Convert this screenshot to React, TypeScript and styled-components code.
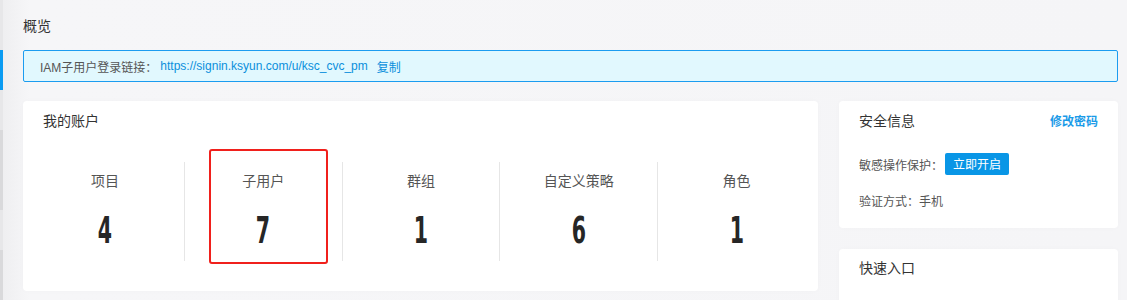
import React from "react";
import styled, { createGlobalStyle } from "styled-components";

const GlobalStyle = createGlobalStyle`
  html, body {
    margin: 0;
    padding: 0;
    background: #f5f5f7;
  }
  body {
    font-family: "Liberation Sans", "Noto Sans CJK SC", sans-serif;
    color: #333;
  }
`;

const stats = [
  { label: "项目", value: 4 },
  { label: "子用户", value: 7, marked: true },
  { label: "群组", value: 1 },
  { label: "自定义策略", value: 6 },
  { label: "角色", value: 1 },
];

const strip = [
  { h: 50, c: "#e7e7e9" },
  { h: 40, c: "#0b9bf2" },
  { h: 40, c: "#e7e7e9" },
  { h: 80, c: "#d9d9db" },
  { h: 40, c: "#e7e7e9" },
  { h: 50, c: "#d9d9db" },
];

const App = () => {
  return (
    <Page>
      <GlobalStyle />
      <Strip>
        {strip.map((s, i) => (
          <StripPart key={i} $h={s.h} $c={s.c} />
        ))}
      </Strip>

      <Main>
        <Title>概览</Title>

        <Alert>
          <AlertLabel>IAM子用户登录链接：</AlertLabel>
          <AlertLink>https://signin.ksyun.com/u/ksc_cvc_pm</AlertLink>
          <CopyLink>复制</CopyLink>
        </Alert>

        <Grid>
          <AccountCard>
            <AccountTitle>我的账户</AccountTitle>
            <Stats>
              {stats.map((s, i) => (
                <Stat key={s.label} $first={i === 0}>
                  <StatLabel>{s.label}</StatLabel>
                  <StatValue>
                    <Digits>{s.value}</Digits>
                  </StatValue>
                  {s.marked && <Mark />}
                </Stat>
              ))}
            </Stats>
          </AccountCard>

          <Side>
            <SecurityCard>
              <CardHead>
                <CardTitle>安全信息</CardTitle>
                <HeadLink>修改密码</HeadLink>
              </CardHead>
              <InfoRow $gap={23}>
                敏感操作保护：
                <EnableButton>立即开启</EnableButton>
              </InfoRow>
              <InfoRow $gap={14}>验证方式：手机</InfoRow>
            </SecurityCard>

            <QuickCard>
              <CardTitle>快速入口</CardTitle>
            </QuickCard>
          </Side>
        </Grid>
      </Main>
    </Page>
  );
};

export default App;

const Page = styled.div`
  display: flex;
  width: 1127px;
  height: 300px;
  overflow: hidden;
  background: linear-gradient(90deg, #eeeef0 0px, #f6f6f8 30px, #f5f5f7 100%);
`;

const Strip = styled.div`
  width: 3px;
  flex-shrink: 0;
  display: flex;
  flex-direction: column;
`;

const StripPart = styled.div<{ $h: number; $c: string }>`
  height: ${(p) => p.$h}px;
  background: ${(p) => p.$c};
`;

const Main = styled.div`
  flex: 1;
  padding: 15px 9px 0 20px;
`;

const Title = styled.div`
  font-family: "Noto Sans CJK SC", sans-serif;
  font-size: 14px;
  line-height: 20px;
  color: #333;
`;

const Alert = styled.div`
  margin-top: 15px;
  height: 32px;
  box-sizing: border-box;
  border: 1px solid #1b9cf0;
  border-radius: 2px;
  background: #e1f8fe;
  display: flex;
  align-items: center;
  padding-left: 16px;
  font-size: 12px;
`;

const AlertLabel = styled.span`
  color: #555;
`;

const AlertLink = styled.span`
  color: #0a8fdc;
  margin-left: 3px;
`;

const CopyLink = styled.span`
  color: #0a8fdc;
  margin-left: 9px;
  font-family: "Noto Sans CJK SC", sans-serif;
`;

const Grid = styled.div`
  margin-top: 19px;
  display: grid;
  grid-template-columns: 795px 279px;
  gap: 21px;
  align-items: start;
`;

const Card = styled.div`
  background: #fff;
  border-radius: 4px;
  box-shadow: 0 0 6px rgba(0, 0, 0, 0.02);
  box-sizing: border-box;
`;

const AccountCard = styled(Card)`
  height: 190px;
  padding-top: 9px;
`;

const CardTitle = styled.div`
  font-family: "Noto Sans CJK SC", sans-serif;
  font-size: 14px;
  line-height: 20px;
  color: #333;
`;

const AccountTitle = styled(CardTitle)`
  padding: 0 20px;
`;

const Stats = styled.div`
  margin-top: 32px;
  padding: 0 3px;
  display: grid;
  grid-template-columns: repeat(5, 1fr);
`;

const Stat = styled.div<{ $first: boolean }>`
  position: relative;
  height: 99px;
  border-left: ${(p) => (p.$first ? "none" : "1px solid #e6e6e6")};
  display: flex;
  flex-direction: column;
  align-items: center;
`;

const StatLabel = styled.div`
  margin-top: 8px;
  font-family: "Noto Sans CJK SC", sans-serif;
  font-size: 14px;
  line-height: 20px;
  color: #555;
`;

const StatValue = styled.div`
  margin-top: 20px;
  height: 40px;
  display: flex;
  align-items: center;
  justify-content: center;
`;

const Digits = styled.span`
  display: inline-block;
  font-family: "DejaVu Sans Condensed", "DejaVu Sans", sans-serif;
  font-weight: bold;
  font-size: 38px;
  line-height: 40px;
  color: #262626;
  transform: scaleX(0.6);
`;

const Mark = styled.div`
  position: absolute;
  left: 24px;
  top: -13px;
  width: 119px;
  height: 115px;
  box-sizing: border-box;
  border: 2px solid #f0201c;
  border-radius: 3px;
`;

const Side = styled.div`
  display: flex;
  flex-direction: column;
  gap: 21px;
`;

const SecurityCard = styled(Card)`
  height: 127px;
  padding: 9px 20px 0;
`;

const CardHead = styled.div`
  display: flex;
  justify-content: space-between;
  align-items: center;
`;

const HeadLink = styled.span`
  font-family: "Noto Sans CJK SC", sans-serif;
  font-size: 12px;
  font-weight: bold;
  color: #1a9be8;
`;

const InfoRow = styled.div<{ $gap: number }>`
  display: flex;
  align-items: center;
  height: 22px;
  margin-top: ${(p) => p.$gap}px;
  font-family: "Noto Sans CJK SC", sans-serif;
  font-size: 12px;
  color: #555;
`;

const EnableButton = styled.button`
  height: 22px;
  padding: 0 8px;
  border: none;
  border-radius: 2px;
  background: #0996e6;
  color: #fff;
  font-family: "Noto Sans CJK SC", sans-serif;
  font-size: 12px;
  line-height: 22px;
  margin-left: 2px;
`;

const QuickCard = styled(Card)`
  height: 80px;
  padding: 8px 20px 0;
`;
